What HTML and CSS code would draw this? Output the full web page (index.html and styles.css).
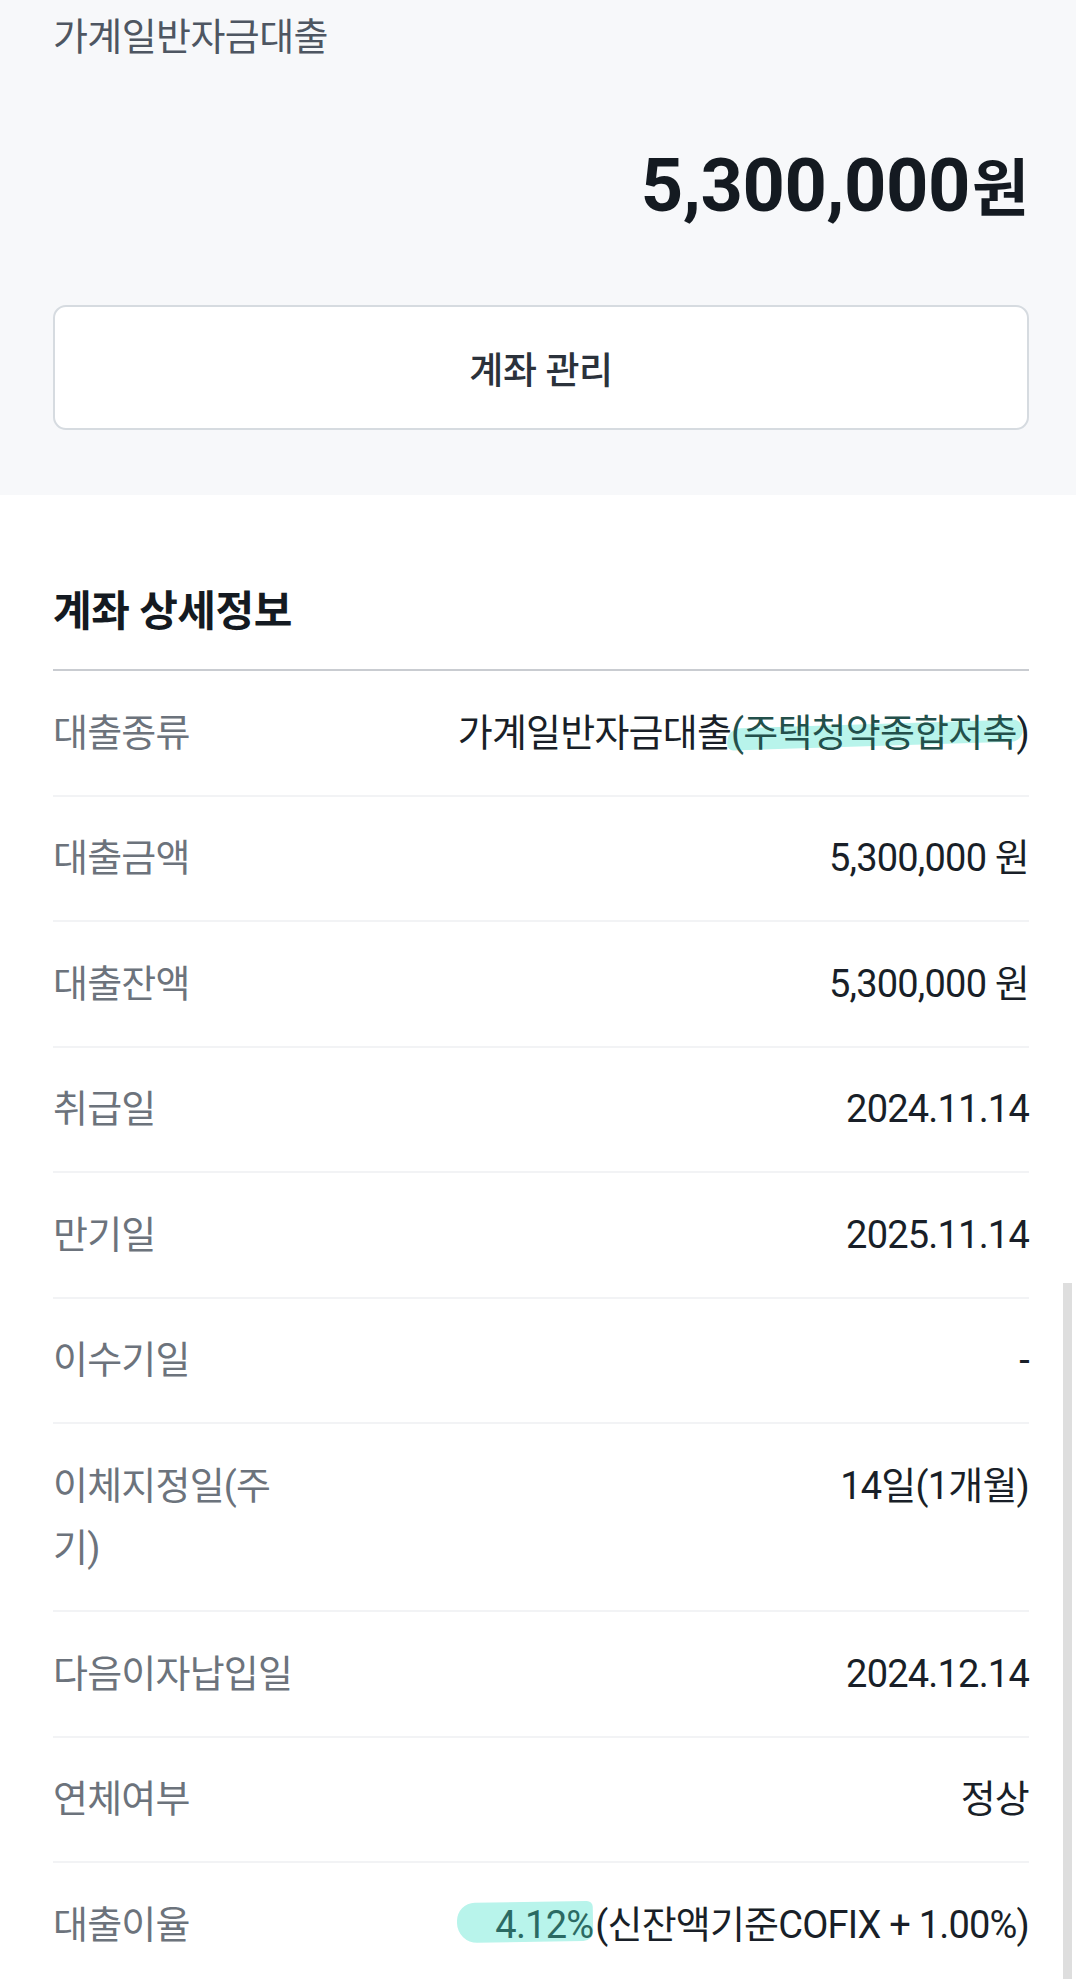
FILE: index.html
```html
<!DOCTYPE html>
<html lang="ko">
<head>
<meta charset="utf-8">
<title>계좌 상세정보</title>
<link rel="stylesheet" href="styles.css">
</head>
<body>
<div class="page">
  <section class="summary">
    <p class="product">가계일반자금대출</p>
    <p class="amount"><span class="num">5,300,000</span><span class="won">원</span></p>
    <button class="manage" type="button">계좌 관리</button>
  </section>

  <section class="details">
    <h2 class="details-title">계좌 상세정보</h2>
    <dl class="rows">
      <div class="row"><dt>대출종류</dt><dd>가계일반자금대출<span class="hl hl-stroke">(주택청약종합저축</span>)</dd></div>
      <div class="row"><dt>대출금액</dt><dd>5,300,000 원</dd></div>
      <div class="row"><dt>대출잔액</dt><dd>5,300,000 원</dd></div>
      <div class="row"><dt>취급일</dt><dd>2024.11.14</dd></div>
      <div class="row"><dt>만기일</dt><dd>2025.11.14</dd></div>
      <div class="row"><dt>이수기일</dt><dd>-</dd></div>
      <div class="row"><dt>이체지정일(주기)</dt><dd>14일(1개월)</dd></div>
      <div class="row"><dt>다음이자납입일</dt><dd>2024.12.14</dd></div>
      <div class="row"><dt>연체여부</dt><dd>정상</dd></div>
      <div class="row"><dt>대출이율</dt><dd><span class="hl hl-blob">4.12%</span>(신잔액기준COFIX + 1.00%)</dd></div>
    </dl>
  </section>
  <div class="scroll-thumb"></div>
</div>
</body>
</html>
```

FILE: styles.css
```css
* { box-sizing: border-box; }

html, body {
  margin: 0;
  padding: 0;
  background: #ffffff;
}

body {
  font-family: Roboto, "Noto Sans CJK KR", sans-serif;
  color: #191f28;
}

.page {
  position: relative;
  width: 1076px;
  overflow: hidden;
}

.summary {
  background: #f7f8fa;
  padding: 11px 47px 65px 53px;
  display: flex;
  flex-direction: column;
}

.product {
  margin: 0;
  font-size: 38px;
  letter-spacing: -0.6px;
  line-height: 52px;
  color: #4e5662;
}

.amount {
  margin: 81px 0 0;
  text-align: right;
  line-height: 84px;
  height: 84px;
  color: #141a21;
  font-weight: 700;
}

.amount .num {
  font-size: 74px;
  letter-spacing: -0.5px;
}

.amount .won {
  font-size: 62px;
  margin-left: 2px;
}

.manage {
  margin-top: 77px;
  height: 125px;
  width: 100%;
  background: #ffffff;
  border: 2px solid #d6dbe0;
  border-radius: 13px;
  font-family: Roboto, "Noto Sans CJK KR", sans-serif;
  font-size: 37px;
  letter-spacing: -0.4px;
  font-weight: 500;
  color: #2b323b;
  padding: 0;
}

.details {
  padding: 89px 47px 0 53px;
}

.details-title {
  margin: 0;
  font-size: 42px;
  letter-spacing: -0.5px;
  line-height: 56px;
  font-weight: 700;
  color: #141a21;
  padding-bottom: 29px;
  border-bottom: 2px solid #c9ccd1;
}

.rows {
  margin: 0;
  padding: 0;
}

.row {
  display: flex;
  align-items: flex-start;
  padding: 30.5px 0;
  border-bottom: 2px solid #f2f3f5;
  font-size: 38px;
  letter-spacing: -0.8px;
  line-height: 62.5px;
}

.row dt {
  flex: 0 0 255px;
  color: #6c737c;
}

.row dd {
  flex: 1;
  margin: 0;
  text-align: right;
  color: #191f28;
  white-space: nowrap;
}

.hl {
  position: relative;
  display: inline-block;
  isolation: isolate;
  color: #23504b;
}

.hl::before {
  content: "";
  position: absolute;
  z-index: -1;
  background: #b8f4eb;
}

.hl-stroke::before {
  left: -4px;
  right: -6px;
  top: 22px;
  height: 22px;
  border-radius: 14px 10px 12px 6px;
  transform: rotate(-1.8deg);
}

.hl-blob {
  color: #2b6a63;
  margin-right: 2px;
}

.hl-blob::before {
  left: -38px;
  right: 0;
  top: 8px;
  height: 40px;
  border-radius: 18px 6px 10px 20px;
  transform: rotate(-1deg);
}

.scroll-thumb {
  position: absolute;
  right: 4px;
  top: 1283px;
  width: 9px;
  height: 760px;
  background: #dedede;
}
```
